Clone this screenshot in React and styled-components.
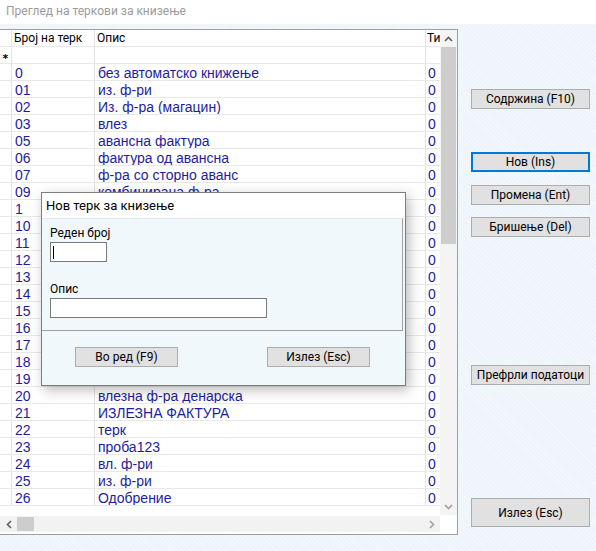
import React from "react";
import styled, { createGlobalStyle } from "styled-components";

const UI_FONT = 'Roboto, "Noto Sans", sans-serif';
const GRID_FONT = '"Liberation Sans", Arial, sans-serif';

const GlobalStyle = createGlobalStyle`
  html, body {
    margin: 0;
    padding: 0;
    background: #edf5fa;
  }
  body {
    font-family: ${UI_FONT};
    font-size: 12px;
    color: #000;
  }
`;

const ROWS = [
  ["0", "без автоматско книжење"],
  ["01", "из. ф-ри"],
  ["02", "Из. ф-ра (магацин)"],
  ["03", "влез"],
  ["05", "авансна фактура"],
  ["06", "фактура од авансна"],
  ["07", "ф-ра со сторно аванс"],
  ["09", "комбинирана ф-ра"],
  ["1", "излезна фактура"],
  ["10", "влезна фактура"],
  ["11", "каса"],
  ["12", "банка"],
  ["13", "нарачка"],
  ["14", "понуда"],
  ["15", "испратница"],
  ["16", "повратница"],
  ["17", "приемница"],
  ["18", "производство"],
  ["19", "полуготов производ"],
  ["20", "влезна ф-ра денарска"],
  ["21", "ИЗЛЕЗНА ФАКТУРА"],
  ["22", "терк"],
  ["23", "проба123"],
  ["24", "вл. ф-ри"],
  ["25", "из. ф-ри"],
  ["26", "Одобрение"],
];

const Window = styled.div`
  position: relative;
  width: 596px;
  height: 551px;
  overflow: hidden;
  display: flex;
  flex-direction: column;
`;

const TitleBar = styled.div`
  height: 24px;
  background: #fff;
  color: #9b9b9b;
  font-size: 12px;
  line-height: 22px;
  padding-left: 6px;
  box-sizing: border-box;
`;

const Main = styled.div`
  flex: 1;
  display: flex;
  padding-top: 5px;
  background-color: #edf5fa;
  background-image: repeating-linear-gradient(
    45deg,
    rgba(255, 255, 255, 0.35) 0 1px,
    transparent 1px 3px
  );
`;

const GridFrame = styled.div`
  width: 458px;
  height: 506px;
  box-sizing: border-box;
  border: 1px solid #a0a0a0;
  border-left: none;
  background: #fff;
  display: flex;
  flex-direction: column;
`;

const GridTop = styled.div`
  height: 485px;
  display: flex;
  flex: none;
`;

const Table = styled.div`
  width: 440px;
  overflow: hidden;
  display: flex;
  flex-direction: column;
`;

const Row = styled.div`
  display: grid;
  grid-template-columns: 12px 83px 331px 14px;
  height: 17px;
  flex: none;
`;

const Cell = styled.div`
  box-sizing: border-box;
  border-right: 1px solid #e3e3e3;
  border-bottom: 1px solid #e8e8e8;
  padding-left: ${(p) => p.$pad ?? 3}px;
  overflow: hidden;
  white-space: nowrap;
  font-family: ${(p) => (p.$head ? UI_FONT : GRID_FONT)};
  font-size: ${(p) => (p.$head ? "12px" : "14px")};
  line-height: ${(p) => (p.$head ? "17px" : "19px")};
  color: ${(p) => (p.$head ? "#000" : "#1e1e9c")};
  &:last-child {
    border-right: none;
  }
`;

const IndicatorCell = styled(Cell)`
  display: flex;
  align-items: center;
  justify-content: center;
  padding: 0;
`;

const Star = styled.span`
  font-family: "DejaVu Sans", sans-serif;
  font-size: 11px;
  line-height: 11px;
  margin-top: 6px;
  color: #000;
  font-weight: bold;
`;

const VScroll = styled.div`
  width: 17px;
  flex: none;
  display: grid;
  grid-template-rows: 17px 197px 1fr 17px;
  background: #f4f4f4;
`;

const ArrowBox = styled.div`
  height: ${(p) => p.$h || 17}px;
  width: ${(p) => p.$w || 17}px;
  display: flex;
  align-items: center;
  justify-content: center;
  flex: none;
`;

const VThumb = styled.div`
  margin: 0 1px;
  background: #cdcdcd;
`;

const Track = styled.div`
  flex: 1;
  background: #f4f4f4;
`;

const HScroll = styled.div`
  height: 16px;
  margin-top: 1px;
  display: flex;
  flex: none;
`;

const HTrack = styled.div`
  width: 440px;
  background: #f2f2f2;
  display: flex;
  align-items: center;
`;

const HThumb = styled.div`
  width: 17px;
  height: 14px;
  flex: none;
  background: #cdcdcd;
`;

const Side = styled.div`
  margin-left: 13px;
  width: 119px;
  display: flex;
  flex-direction: column;
`;

const Button = styled.button`
  box-sizing: border-box;
  width: ${(p) => p.$w || 119}px;
  height: ${(p) => p.$h || 20}px;
  margin-top: ${(p) => p.$top || 0}px;
  background: #e1e1e1;
  border: ${(p) => (p.$focus ? "2px solid #0078d7" : "1px solid #adadad")};
  font-family: ${UI_FONT};
  font-size: 12px;
  color: #000;
  padding: 0;
  line-height: 1;
  flex: none;
`;

const Dialog = styled.div`
  position: absolute;
  left: 41px;
  top: 192px;
  width: 365px;
  height: 194px;
  box-sizing: border-box;
  border: 1px solid #7d7d7d;
  background: #f0f8fc;
  box-shadow: 3px 4px 12px rgba(0, 0, 0, 0.28);
  display: flex;
  flex-direction: column;
`;

const DialogTitle = styled.div`
  height: 25px;
  background: #fff;
  font-family: ${UI_FONT};
  font-size: 13px;
  line-height: 25px;
  padding-left: 4px;
`;

const Panel = styled.div`
  width: 361px;
  height: 113px;
  box-sizing: border-box;
  border-top: 1px solid #dfe9ef;
  border-right: 1px solid #a0a0a0;
  border-bottom: 1px solid #a0a0a0;
  padding: 6px 0 0 8px;
  display: flex;
  flex-direction: column;
`;

const Label = styled.div`
  font-family: ${UI_FONT};
  font-size: 12px;
  line-height: 16px;
  height: 17px;
  margin-top: ${(p) => p.$top || 0}px;
`;

const Input = styled.div`
  box-sizing: border-box;
  width: ${(p) => p.$w}px;
  height: 20px;
  background: #fff;
  border: 1px solid #7a7a7a;
  display: flex;
  align-items: center;
  padding-left: 2px;
`;

const Caret = styled.span`
  width: 1px;
  height: 13px;
  background: #000;
`;

const DialogButtons = styled.div`
  display: flex;
  gap: 89px;
  padding: 16px 0 0 33px;
`;

export default function App() {
  return (
    <Window>
      <GlobalStyle />
      <TitleBar>Преглед на теркови за книзење</TitleBar>
      <Main>
        <GridFrame>
          <GridTop>
            <Table>
              <Row>
                <Cell $head />
                <Cell $head $pad={2}>Број на терк</Cell>
                <Cell $head $pad={2}>Опис</Cell>
                <Cell $head $pad={1}>Тип</Cell>
              </Row>
              <Row>
                <IndicatorCell>
                  <Star>*</Star>
                </IndicatorCell>
                <Cell />
                <Cell />
                <Cell />
              </Row>
              {ROWS.map(([n, d]) => (
                <Row key={n}>
                  <Cell />
                  <Cell>{n}</Cell>
                  <Cell>{d}</Cell>
                  <Cell $pad={2}>0</Cell>
                </Row>
              ))}
            </Table>
            <VScroll>
              <ArrowBox>
                <svg width="9" height="6" viewBox="0 0 9 6">
                  <polyline points="1,5 4.5,1.5 8,5" fill="none" stroke="#606060" strokeWidth="1.6" />
                </svg>
              </ArrowBox>
              <VThumb />
              <Track />
              <ArrowBox>
                <svg width="9" height="6" viewBox="0 0 9 6">
                  <polyline points="1,1 4.5,4.5 8,1" fill="none" stroke="#a0a0a0" strokeWidth="1.6" />
                </svg>
              </ArrowBox>
            </VScroll>
          </GridTop>
          <HScroll>
            <HTrack>
              <ArrowBox $h={16}>
                <svg width="6" height="9" viewBox="0 0 6 9">
                  <polyline points="5,1 1.5,4.5 5,8" fill="none" stroke="#606060" strokeWidth="1.6" />
                </svg>
              </ArrowBox>
              <HThumb />
              <Track />
              <ArrowBox $h={16}>
                <svg width="6" height="9" viewBox="0 0 6 9">
                  <polyline points="1,1 4.5,4.5 1,8" fill="none" stroke="#a0a0a0" strokeWidth="1.6" />
                </svg>
              </ArrowBox>
            </HTrack>
          </HScroll>
        </GridFrame>
        <Side>
          <Button $top={60}>Содржина (F10)</Button>
          <Button $top={43} $focus>Нов (Ins)</Button>
          <Button $top={13}>Промена (Ent)</Button>
          <Button $top={12}>Бришење (Del)</Button>
          <Button $top={128}>Префрли податоци</Button>
          <Button $top={113} $h={29}>Излез (Esc)</Button>
        </Side>
      </Main>

      <Dialog>
        <DialogTitle>Нов терк за книзење</DialogTitle>
        <Panel>
          <Label>Реден број</Label>
          <Input $w={57}>
            <Caret />
          </Input>
          <Label $top={19}>Опис</Label>
          <Input $w={217} />
        </Panel>
        <DialogButtons>
          <Button $w={103}>Во ред (F9)</Button>
          <Button $w={103}>Излез (Esc)</Button>
        </DialogButtons>
      </Dialog>
    </Window>
  );
}
